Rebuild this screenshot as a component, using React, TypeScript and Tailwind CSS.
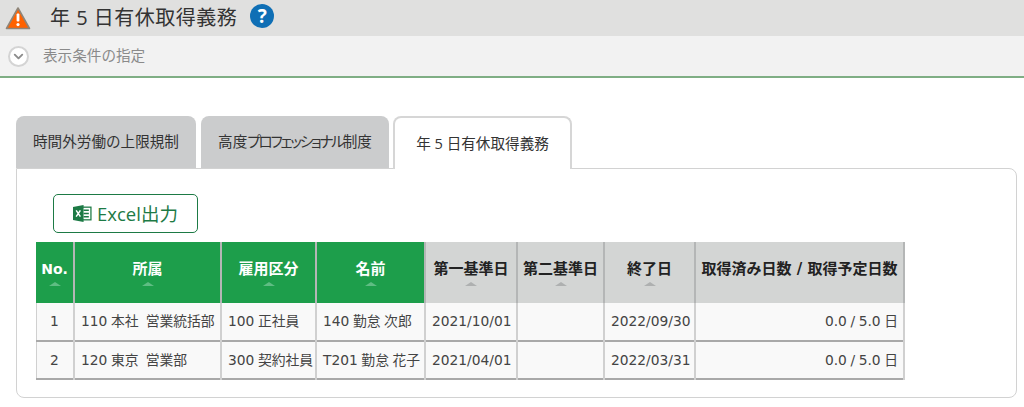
import { ChevronDown } from "lucide-react";

const cjk = "font-['Open_Sans','Noto_Sans_CJK_JP',sans-serif]";
const cellFont = "font-['DejaVu_Sans','Noto_Sans_CJK_JP',sans-serif]";

const columns = [
  { label: "No.", width: 38, green: true },
  { label: "所属", width: 147, green: true },
  { label: "雇用区分", width: 95, green: true },
  { label: "名前", width: 109, green: true },
  { label: "第一基準日", width: 92, green: false },
  { label: "第二基準日", width: 87, green: false },
  { label: "終了日", width: 91, green: false },
  { label: "取得済み日数 / 取得予定日数", width: 209, green: false, noSort: true },
];

const rows = [
  ["1", "110 本社  営業統括部", "100 正社員", "140 勤怠 次郎", "2021/10/01", "", "2022/09/30", "0.0 / 5.0 日"],
  ["2", "120 東京  営業部", "300 契約社員", "T201 勤怠 花子", "2021/04/01", "", "2022/03/31", "0.0 / 5.0 日"],
];

function WarningIcon() {
  return (
    <svg width="26" height="25" viewBox="0 0 26 25">
      <path d="M13 2 L24.5 22.5 H1.5 Z" fill="#ff6200" stroke="#8f8578" strokeWidth="1.6" strokeLinejoin="round" />
      <rect x="11.6" y="7.5" width="2.8" height="8" rx="1" fill="#fff" />
      <circle cx="13" cy="18.6" r="1.6" fill="#fff" />
    </svg>
  );
}

function ExcelIcon() {
  return (
    <svg width="19" height="17" viewBox="0 0 18 16">
      <rect x="8" y="2" width="9" height="12" fill="#fff" stroke="#1d7a45" strokeWidth="1.2" />
      <path d="M10 5 H15 M10 8 H15 M10 11 H15" stroke="#1d7a45" strokeWidth="1.4" />
      <path d="M0 1.8 L10 0 V16 L0 14.2 Z" fill="#1d7a45" />
      <path d="M3 5 L7 11 M7 5 L3 11" stroke="#fff" strokeWidth="1.4" />
    </svg>
  );
}

export default function App() {
  return (
    <div className={`w-[1024px] h-[407px] overflow-hidden bg-white ${cjk}`}>
      {/* title */}
      <div className="h-[36px] bg-[#e0e0df] flex items-center pl-[5px]">
        <WarningIcon />
        <h1 className="ml-[19px] text-[20px] text-[#333] tracking-[0.5px] font-normal">年 5 日有休取得義務</h1>
        <div className="ml-[13px] mb-[4px] w-[24px] h-[24px] rounded-full bg-[#0f6fb5] text-white flex items-center justify-center text-[19px] font-bold">?</div>
      </div>

      {/* filter bar */}
      <div className="h-[42px] bg-[#f2f2f2] border-b-2 border-[#7fae84] flex items-center pl-[8px]">
        <div className="w-[21px] h-[21px] rounded-full bg-white border-2 border-[#d4d4d4] flex items-center justify-center">
          <ChevronDown size={15} strokeWidth={3} className="text-[#8c8c8c]" />
        </div>
        <span className="ml-[14px] text-[14.6px] text-[#8a8a8a]">表示条件の指定</span>
      </div>

      {/* tabs */}
      <div className="mt-[38px] mx-[16px] w-[1001px]">
        <div className="flex h-[52px] relative z-10">
          <div className="w-[180px] h-[52px] rounded-t-[8px] bg-[#cbcccd] flex items-center justify-center text-[14.6px] text-[#333]">時間外労働の上限規制</div>
          <div className="ml-[5px] w-[188px] h-[52px] rounded-t-[8px] bg-[#cbcccd] flex items-center justify-center text-[14.6px] text-[#333] [font-feature-settings:'palt'] whitespace-nowrap">
            <span>高度<span className="tracking-[-2.2px]">プロフェッショナル</span>制度</span>
          </div>
          <div className="ml-[4px] w-[179px] h-[53px] rounded-t-[8px] bg-white border-2 border-b-0 border-[#d6d6d6] flex items-center justify-center text-[14.6px] text-[#333]">年 5 日有休取得義務</div>
        </div>

        {/* panel */}
        <div className="h-[230px] border border-[#d2d2d2] rounded-b-[8px] rounded-tr-[8px] pl-[19px] pt-[25px]">
          <button className="ml-[17px] w-[145px] h-[39px] rounded-[5px] border border-[#1d7a45] bg-white flex items-center justify-center gap-[5px] text-[#1d7a45] text-[18.5px]">
            <ExcelIcon />
            <span>Excel出力</span>
          </button>

          <table className={`mt-[9px] w-[868px] table-fixed border-collapse text-[13.8px] [word-spacing:-0.8px] text-[#444] ${cellFont}`}>
            <colgroup>
              {columns.map((c) => (
                <col key={c.label} style={{ width: c.width }} />
              ))}
            </colgroup>
            <thead>
              <tr className="h-[61px]">
                {columns.map((c, i) => (
                  <th
                    key={c.label}
                    className={`p-0 font-bold align-middle border-r-2 border-[#b4b6b6] [word-spacing:0] ${
                      c.green ? "bg-[#1d9e4b] text-white" : "bg-[#d3d5d4] text-[#222]"
                    } ${i === 3 ? "border-r-0" : ""} ${i === 0 ? "text-[14px]" : "text-[15px]"}`}
                  >
                    <div className="relative h-[61px] flex items-center justify-center pb-[6px] whitespace-nowrap">
                      {c.label}
                      {!c.noSort && (
                        <span
                          className={`absolute left-1/2 -translate-x-1/2 top-[40px] w-0 h-0 border-x-[6px] border-x-transparent border-b-[4px] ${
                            c.green ? "border-b-[#5fbd83]" : "border-b-[#aeb0b0]"
                          }`}
                        />
                      )}
                    </div>
                  </th>
                ))}
              </tr>
            </thead>
            <tbody>
              {rows.map((row, r) => (
                <tr key={r} className="h-[38px] bg-[#f9f9f9] border-b-2 border-[#a9a9a9]">
                  {row.map((cell, i) => (
                    <td
                      key={i}
                      className={`p-0 pl-[6px] whitespace-pre border-r-2 border-[#d0d0d0] ${
                        i === 0 || i === 4 || i === 6 ? "text-center pr-[6px]" : i === 7 ? "text-right pr-[5px]" : "text-left pr-[2px]"
                      } ${i === 7 ? "border-r-0" : ""} ${i === 0 ? "shadow-[inset_1px_0_0_#d0d0d0]" : ""}`}
                    >
                      {cell}
                    </td>
                  ))}
                </tr>
              ))}
            </tbody>
          </table>
        </div>
      </div>
    </div>
  );
}
